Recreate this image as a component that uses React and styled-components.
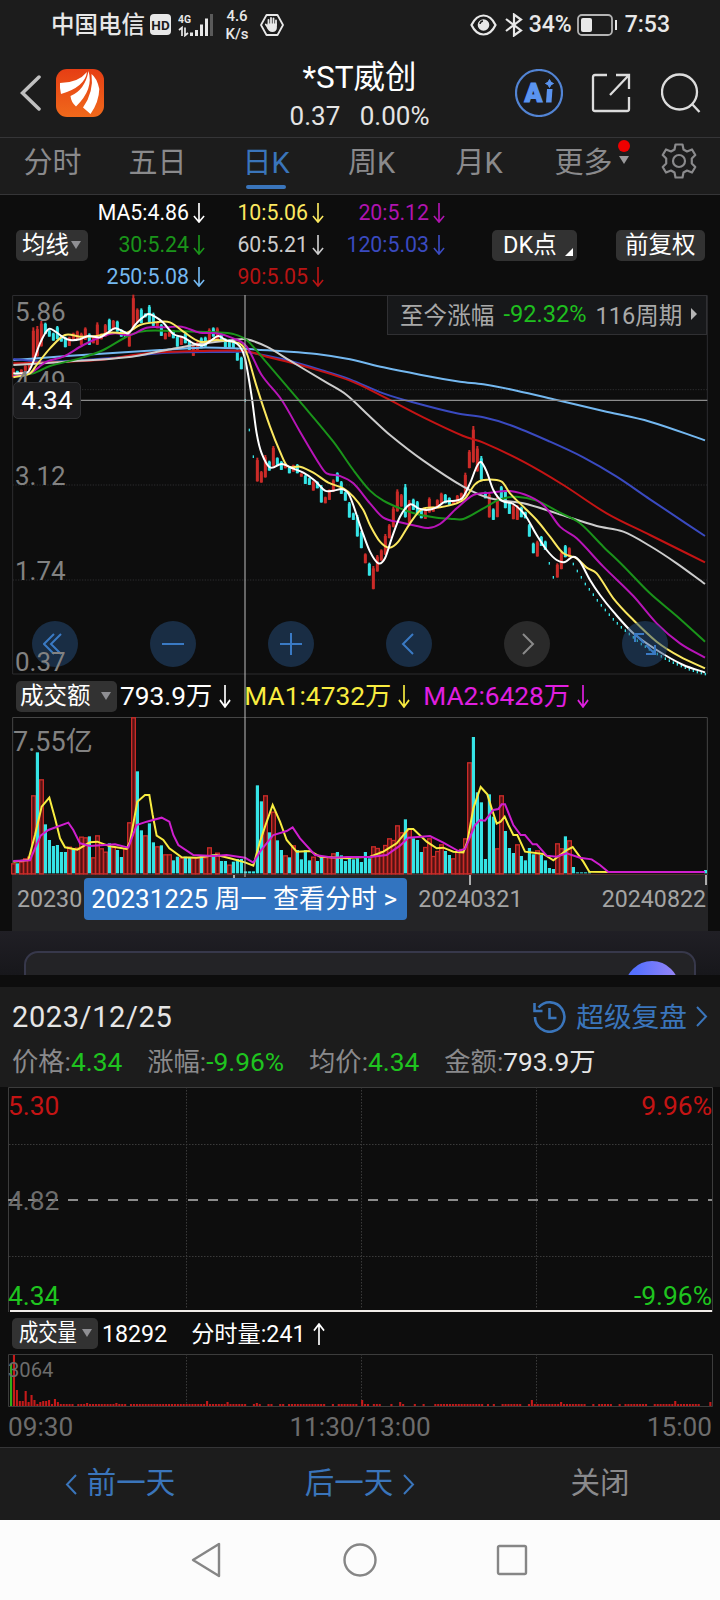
import React from "react";
import styled, { createGlobalStyle } from "styled-components";

const Global = createGlobalStyle`
  * { box-sizing: border-box; }
  body {
    margin: 0;
    background: #0d0d0d;
    font-family: Roboto, "Noto Sans CJK SC", sans-serif;
  }
  svg { display: block; flex: none; }
`;

const Screen = styled.div`
  width: 720px;
  height: 1600px;
  overflow: hidden;
  background: #0d0d0d;
  color: #fff;
  white-space: nowrap;
`;

/* ---------- status bar ---------- */
const StatusBar = styled.div`
  display: flex;
  align-items: center;
  height: 48px;
  padding: 1px 50px 0 51px;
  background: #1c1c1c;
  color: #e8e8e8;
`;
const StatusText = styled.span`
  font-size: ${(p) => p.$size || 23}px;
  font-weight: 500;
  line-height: 24px;
  margin-left: ${(p) => p.$left || 0}px;
`;
const HdBadge = styled.span`
  width: 21px;
  height: 21px;
  margin-left: 5px;
  border-radius: 4px;
  background: #e8e8e8;
  color: #1c1c1c;
  font-size: 13.5px;
  font-weight: 700;
  line-height: 22px;
  text-align: center;
`;
const Speed = styled.div`
  width: 24px;
  margin-left: 11px;
  font-size: 15px;
  font-weight: 500;
  line-height: 18px;
  text-align: center;
`;
const StatusRight = styled.div`
  display: flex;
  align-items: center;
  margin-left: auto;
`;

/* ---------- header ---------- */
const Header = styled.header`
  display: grid;
  grid-template-columns: 56px 104px 1fr 76px 70px 59px;
  align-items: center;
  height: 90px;
  padding-top: 1px;
  background: #1c1c1c;
  border-bottom: 1px solid #353537;
`;
const Title = styled.div`
  text-align: center;
  padding: 6px 0 0 44px;
  h1 {
    margin: 0;
    font-size: 31.5px;
    font-weight: 400;
    line-height: 39px;
  }
  p {
    margin: 0;
    font-size: 26px;
    line-height: 38px;
    color: #e4e4e4;
    word-spacing: 13px;
  }
`;

/* ---------- tabs ---------- */
const Tabs = styled.nav`
  display: grid;
  grid-template-columns: 105px 105px 112px 99px 116px 93px 90px;
  height: 57px;
  background: #1c1c1c;
  border-bottom: 1px solid #353537;
`;
const Tab = styled.div`
  position: relative;
  padding-top: 3px;
  font-size: 29px;
  line-height: 44px;
  text-align: center;
  color: ${(p) => (p.$on ? "#3a75bb" : "#8a8a8c")};
  &::after {
    content: "";
    display: ${(p) => (p.$on ? "block" : "none")};
    width: 40px;
    height: 4px;
    margin: 0 auto;
    border-radius: 2px;
    background: #3a75bb;
  }
`;
const RedDot = styled.i`
  position: absolute;
  right: 0;
  top: 2px;
  width: 12px;
  height: 12px;
  border-radius: 50%;
  background: #ef0000;
`;
const MoreArrow = styled.i`
  position: absolute;
  right: 1px;
  top: 18px;
  border: 5px solid transparent;
  border-top: 8px solid #9a9a9c;
  border-bottom: 0;
`;
const GearCell = styled.div`
  display: flex;
  justify-content: center;
  padding: 5px 0 0 8px;
`;

/* ---------- moving average legend ---------- */
const Legend = styled.section`
  display: grid;
  grid-template-columns: 72px 117px 119px 121px 1fr auto auto;
  align-items: center;
  height: 100px;
  padding: 0 15px 0 16px;
`;
const LegendColumn = styled.div`
  display: grid;
  grid-template-rows: repeat(3, 32px);
  justify-items: end;
`;
const LegendItem = styled.div`
  display: flex;
  align-items: center;
  gap: 4px;
  font-size: 21.3px;
  line-height: 30px;
  color: ${(p) => p.$color};
`;
const Chip = styled.div`
  position: relative;
  display: flex;
  align-items: center;
  width: ${(p) => p.$w}px;
  height: 31px;
  margin-right: ${(p) => p.$mr || 0}px;
  padding-left: ${(p) => p.$pl || 5}px;
  border-radius: 5px;
  background: #323232;
  font-size: ${(p) => p.$size || 23.5}px;
  line-height: 31px;
`;
const Caret = styled.i`
  margin-left: ${(p) => p.$left || 0}px;
  border: 5px solid transparent;
  border-top: 8px solid #8f8f93;
  border-bottom: 0;
`;
const Corner = styled.i`
  position: absolute;
  right: 4px;
  bottom: 5px;
  border-bottom: 8px solid #fff;
  border-left: 8px solid transparent;
`;
const Narrow = styled.span`
  display: inline-block;
  width: 57px;
  transform: scaleX(0.82);
  transform-origin: left;
`;

/* ---------- charts ---------- */
const ChartArea = styled.div`
  position: relative;
`;
const KChart = styled.div`
  position: relative;
  height: 379px;
`;
const PriceLabel = styled.span`
  position: absolute;
  left: 15px;
  top: ${(p) => p.$top}px;
  font-size: 26px;
  line-height: 30px;
  color: #828282;
`;
const PriceTag = styled.div`
  position: absolute;
  left: 13px;
  top: 87px;
  width: 68px;
  height: 37px;
  border: 1px solid #303033;
  border-radius: 5px;
  background: #1c1c1e;
  font-size: 26.3px;
  line-height: 35px;
  text-align: center;
`;
const RangeInfo = styled.div`
  position: absolute;
  right: 13px;
  top: 0;
  display: flex;
  align-items: center;
  gap: 9px;
  width: 320px;
  height: 40px;
  padding: 0 12px 2px 12px;
  border: 1px solid #303033;
  background: #17181a;
  color: #a9a9a9;
  font-size: 23.6px;
  b {
    font-weight: 400;
    color: #1fbf1f;
  }
`;
const Controls = styled.div`
  position: absolute;
  left: 32px;
  top: 326px;
  display: flex;
  gap: 72px;
`;
const RoundButton = styled.div`
  display: flex;
  align-items: center;
  justify-content: center;
  width: 46px;
  height: 46px;
  border-radius: 50%;
  background: ${(p) => (p.$off ? "rgba(72,72,72,.5)" : "rgba(38,78,124,.5)")};
`;
const CrossV = styled.i`
  position: absolute;
  z-index: 1;
  left: 244px;
  top: 0;
  width: 2px;
  height: 582px;
  background: rgba(190, 190, 190, 0.5);
`;
const VolumeHead = styled.div`
  display: flex;
  align-items: center;
  height: 43px;
  padding: 1px 0 0 16px;
`;
const Figure = styled.div`
  display: flex;
  align-items: center;
  gap: ${(p) => p.$gap || 7}px;
  margin-left: ${(p) => p.$left}px;
  padding-top: ${(p) => p.$top || 0}px;
  font-size: ${(p) => p.$size || 26.3}px;
  line-height: 32px;
  color: ${(p) => p.$color || "#fff"};
`;
const VolumeChart = styled.div`
  position: relative;
  height: 158px;
`;
const VolumeMax = styled.span`
  position: absolute;
  left: 13px;
  top: 9px;
  font-size: 27px;
  line-height: 32px;
  color: #828282;
`;
const DateAxis = styled.div`
  display: flex;
  justify-content: space-between;
  height: 56px;
  margin: 0 12px;
  padding: 3px 2px 0 5px;
  background: #242426;
  color: #a4a4a4;
  font-size: 23.2px;
  line-height: 43px;
`;
const DateGroup = styled.div`
  display: flex;
`;
const DateButton = styled.div`
  position: relative;
  z-index: 2;
  width: 323px;
  height: 42px;
  margin: 0 11px 0 2px;
  padding-right: 3px;
  border-radius: 4px;
  background: #3274c0;
  color: #fff;
  font-size: 26px;
  line-height: 42px;
  text-align: center;
`;

/* ---------- banner ---------- */
const Banner = styled.div`
  height: 44px;
  margin-bottom: 12px;
  padding: 20px 24px 0;
  overflow: hidden;
  background: linear-gradient(#201f25, #17171b);
`;
const BannerCard = styled.div`
  display: flex;
  justify-content: flex-end;
  height: 70px;
  padding: 8px 15px;
  border: 2px solid #37384b;
  border-radius: 14px;
  background: #232326;
  &::after {
    content: "";
    width: 54px;
    height: 54px;
    border-radius: 50%;
    background: linear-gradient(90deg, #5570ff 20%, #9a86f5);
  }
`;

/* ---------- day detail ---------- */
const Detail = styled.section`
  height: 100px;
  padding: 10px 12px 0;
  background: #1c1c1c;
`;
const DetailTop = styled.div`
  display: flex;
  align-items: center;
  height: 40px;
  color: #e6e6e6;
  font-size: 29px;
  letter-spacing: 0.6px;
`;
const Replay = styled.div`
  display: flex;
  align-items: center;
  margin-left: auto;
  color: #3a75bb;
  font-size: 27.7px;
  letter-spacing: 0;
  line-height: 38px;
  svg { margin-bottom: 2px; }
  span { margin: 1px 9px 0 10px; }
`;
const DetailRow = styled.div`
  display: flex;
  gap: 25px;
  margin-top: 6px;
  font-size: 26.3px;
  line-height: 39px;
  color: #8a8a8c;
`;
const Value = styled.span`
  color: ${(p) => p.$color};
`;
const DayChart = styled.div`
  position: relative;
  height: 225px;
`;
const DayLabel = styled.span`
  position: absolute;
  ${(p) => (p.$right ? "right: 8px" : "left: 8px")};
  top: ${(p) => p.$top}px;
  font-size: ${(p) => p.$size || 26.4}px;
  line-height: 30px;
  color: ${(p) => p.$color};
`;
const DayHead = styled.div`
  display: flex;
  align-items: center;
  height: 42px;
  padding: 0 12px;
`;
const DayVolume = styled.div`
  position: relative;
  height: 53px;
`;
const Times = styled.div`
  display: flex;
  justify-content: space-between;
  height: 40px;
  padding: 0 8px;
  color: #6c6c6c;
  font-size: 26.2px;
  line-height: 40px;
`;

/* ---------- bottom ---------- */
const Actions = styled.div`
  display: grid;
  grid-template-columns: repeat(3, 1fr);
  height: 73px;
  padding-bottom: 3px;
  border-top: 1px solid #353537;
  background: #1c1c1c;
  font-size: 29.5px;
  line-height: 40px;
  color: #3a75bb;
  svg { margin-top: 3px; }
`;
const Action = styled.div`
  display: flex;
  align-items: center;
  justify-content: center;
  gap: 10px;
  color: ${(p) => (p.$muted ? "#8a8a8c" : "inherit")};
`;
const SystemNav = styled.div`
  display: grid;
  grid-template-columns: 206px 1fr 206px;
  align-items: center;
  justify-items: center;
  height: 80px;
  padding: 0 103px;
  background: #fcfcfc;
  svg:last-child { margin-right: 4px; }
`;

const RED = "#cb2b28";
const CYAN = "#35e4e6";

// one entry per trading day: direction, high, low (chart units)
const candles =
  "r234-262 c242-256 r238-250 r226-245 r215-240 r112-215 r108-200 r93-170 c98-132 c120-140 c128-152 c108-148 c135-155 c140-172 r140-168 r128-152 r122-150 r128-165 r112-150 c130-165 r140-160 r97-165 r130-148 r102-140 c86-122 r90-118 c92-125 c118-140 c125-142 r125-170 r14-120 r55-98 c55-100 c70-82 c45-98 c68-108 r95-115 c102-138 r128-148 r118-140 c120-145 c138-170 r140-165 c128-160 c150-180 r165-198 r155-185 c142-175 c140-170 r115-160 c112-140 r112-150 c130-155 c145-172 c148-175 c150-175 c178-212 c200-238 d331 d420 d500 r503-575 r543-578 r495-563 c512-542 r468-528 c502-528 c513-540 r520-535 c530-550 r524-545 c522-550 r550-560 c555-582 c563-585 r572-602 c574-595 c585-638 r620-640 r598-630 r568-605 c547-575 c573-612 c605-632 c636-683 c668-690 c675-740 c723-775 r790-820 c818-857 r828-898 r795-845 r778-812 r732-795 r702-745 r650-712 r598-665 r612-650 c582-683 r630-708 c626-660 c633-670 c655-685 r655-687 r622-668 r650-665 r628-655 r608-640 c612-640 c622-645 r630-645 r615-640 r608-630 r548-618 r480-535 r408-518 r468-545 c498-570 c605-625 r608-683 c655-690 r620-682 c588-625 c600-655 c638-672 r645-688 r645-690 c650-682 c665-685 c702-740 c758-790 r752-800 c738-768 c752-780 d820 d862 r820-863 r785-838 c765-802 r772-802 d822 d843 d862 d882 d898 d914 d931 d946 d960 d974 d988 d1000 d1012 d1022 d1032 d1042 d1052 d1062 d1070 d1078 d1085 d1092 d1099 d1106 d1112 d1118 d1123 d1128 d1133 d1138 d1142 d1146 d1149 d1152".split(" ");

const volumes =
  "r565 c565 r560 r550 r545 r361 c232 r313 c448 c495 c513 c510 c531 c531 r515 c520 r518 r485 r487 c484 r547 r481 r520 r530 c505 r515 c525 c546 r520 r442 r127 c289 c466 r481 c445 c502 r514 c511 r538 r538 c556 c545 r548 c545 c547 r547 r547 c542 r547 r517 c538 r533 c558 c558 r569 c560 c552 c552 c589 c589 c589 c331 c379 r361 c472 r410 c496 c525 r541 c547 r511 c525 c553 c525 c556 r545 c558 c547 r545 r545 r535 c531 c541 c558 c545 c553 c550 c561 c531 c550 r514 r519 r528 r510 r490 r495 r451 r472 c433 r460 c490 c495 c531 r516 r490 r543 r528 r508 c528 c540 r550 r530 r522 r490 r262 c186 c352 c382 c552 c358 c425 r520 r361 c468 c519 c534 r508 c543 c556 c519 c538 r526 c540 c556 c579 c582 r505 r520 c484 r496 c576 c592 c592 c592 c592".split(" ");

// [colour, points left half, points right half (shifted by 1050)]
const averages = [
  ["#74b8f0", "40,210 200,198 350,188 480,180 600,173 700,175 850,184 950,192", "0,208 100,232 210,254 330,275 400,283 500,302 620,330 760,363 900,395 1065,451"],
  ["#3a4ac0", "40,207 150,215 380,200 500,188 700,186 740,186 850,208 980,245", "0,268 100,310 200,340 320,370 400,382 480,405 600,455 700,502 800,560 900,628 1065,738"],
  ["#c41414", "40,220 300,210 440,190 600,183 735,183 800,200 900,225", "0,272 100,320 220,382 340,438 400,458 520,515 640,585 770,670 900,735 1065,817"],
  ["#cccccc", "40,225 200,215 380,202 500,180 600,162 700,150 740,148 800,170 870,212 980,278 1040,315", "60,380 120,435 220,512 340,590 420,625 520,640 620,670 740,708 820,725 900,768 980,820 1065,882"],
  ["#1a941a", "40,255 100,250 150,228 240,205 310,180 390,135 440,122 550,124 650,127 700,132 740,150 800,218 900,335 1000,455 1060,540", "60,602 100,632 150,655 200,672 260,683 300,686 340,687 400,655 450,628 500,620 560,632 630,668 690,700 760,770 820,828 900,910 980,978 1065,1055"],
  ["#b814b8", "40,258 90,250 140,215 190,200 250,165 310,138 345,130 390,135 440,113 500,112 545,110 600,128 650,130 700,145 740,170 785,255 845,330 900,425 960,525 980,550 1020,558 1060,580", "60,640 100,683 150,697 200,708 235,714 270,702 320,655 370,615 420,608 480,603 540,620 585,650 630,710 680,745 760,830 850,918 920,1000 990,1060 1065,1103"],
  ["#fbe860", "40,262 90,250 110,225 150,175 195,135 240,140 290,138 330,128 380,128 420,105 465,97 510,97 550,125 600,155 650,150 700,155 725,165 742,195 770,290 810,410 840,485 862,528 900,530 940,548 985,578 1030,595 1060,620", "40,660 60,705 90,755 118,773 145,755 180,700 215,658 270,652 320,640 345,625 375,583 400,570 455,575 480,610 520,650 560,690 600,740 640,790 680,805 710,833 740,850 790,925 850,990 920,1055 990,1100 1065,1135"],
  ["#ffffff", "40,250 60,250 85,245 100,215 120,160 145,118 165,124 190,142 210,150 240,148 265,138 300,142 320,130 345,115 370,124 385,130 405,105 425,85 445,72 465,80 490,98 520,132 550,142 580,160 610,166 635,150 655,138 680,152 700,155 720,170 735,205 755,320 770,430 785,490 810,532 845,522 880,536 910,548 945,572 975,602 1000,602 1030,598 1050,620", "35,720 60,785 85,820 105,805 125,745 150,680 180,643 205,655 230,660 260,652 285,635 335,626 360,580 380,530 393,516 410,545 430,600 455,632 490,642 525,675 560,735 590,780 620,810 645,816 670,800 690,815 720,870 750,915 790,965 850,1030 920,1080 1000,1125 1065,1147"],
];

const volumeAverages = [
  ["#f8ec40", "40,560 85,555 105,480 125,395 148,368 165,430 180,490 195,517 232,524 270,502 292,500 330,514 380,522 390,500 412,380 435,360 448,360 458,420 470,482 490,495 508,520 545,547 590,548 650,540 690,550 735,562 760,572 780,500 795,455 818,390 840,440 860,495 890,530 930,528 960,545 1040,550", "0,548 60,545 100,530 140,505 175,462 190,462 230,500 260,520 280,518 310,530 340,532 352,500 370,400 392,336 412,358 425,400 440,446 452,440 464,425 475,450 490,480 502,480 525,530 580,537 610,556 650,525 668,516 700,560 718,590 780,591 1065,591"],
  ["#cf1fcf", "40,558 90,556 105,520 122,482 145,465 205,443 220,465 240,505 270,513 345,508 385,518 410,450 440,440 485,428 508,440 520,480 535,510 580,540 640,543 680,540 735,548 760,563 780,530 820,480 860,468 878,457 900,490 945,540 1000,548 1040,546", "60,546 110,540 150,512 175,488 240,483 280,503 325,528 345,522 375,450 390,435 405,437 430,405 445,402 455,388 465,388 490,450 512,480 525,480 548,508 560,508 590,542 620,545 650,535 690,548 725,553 750,570 775,591 1065,591"],
];

function parse(left, right) {
  const read = (s, dx) => s.split(" ").map((p) => {
    const [x, y] = p.split(",").map(Number);
    return [x + dx, y];
  });
  return [...read(left, 0), ...read(right, 1050)];
}

// catmull-rom through all points
function curve(pts) {
  let d = `M${pts[0]}`;
  for (let i = 0; i < pts.length - 1; i++) {
    const a = pts[i - 1] || pts[i];
    const b = pts[i];
    const c = pts[i + 1];
    const e = pts[i + 2] || c;
    const dx = (c[0] - b[0]) / 3;
    const s1 = (c[1] - a[1]) / (c[0] - a[0]);
    const s2 = (e[1] - b[1]) / (e[0] - b[0]);
    d += `C${b[0] + dx},${b[1] + s1 * dx} ${c[0] - dx},${c[1] - s2 * dx} ${c}`;
  }
  return d;
}

function CandleChart() {
  return (
    <svg width="720" height="379" viewBox="0 15 2160 1137" overflow="visible">
      <path d="M38 16.5H2122V1152H38Z" fill="none" stroke="#2c2c2f" strokeWidth="3" />
      <path d="M38 299H2122M38 585H2122M38 870H2122" stroke="#2c2c2e" strokeWidth="3" strokeDasharray="4 4" />
      {candles.map((c, i) => {
        const x = 40 + i * 12;
        const [a, b] = c.slice(1).split("-").map(Number);
        if (c[0] === "d") return <rect key={i} x={x - 2} y={a - 4} width="4" height="8" fill={CYAN} />;
        return (
          <g key={i} fill={c[0] === "r" ? RED : CYAN}>
            <rect x={x - 3} y={a} width="6" height={b - a} />
            <rect x={x - 4.5} y={a + (b - a) * 0.1} width="9" height={(b - a) * 0.88} />
          </g>
        );
      })}
      {averages.map(([color, l, r]) => (
        <path key={color} d={curve(parse(l, r))} fill="none" stroke={color} strokeWidth="6" />
      ))}
      <path d="M240 331H2122" stroke="#8c8c8c" strokeWidth="3.5" />
    </svg>
  );
}

function VolumeBars() {
  return (
    <svg width="720" height="158" viewBox="0 126 2160 474" overflow="visible">
      <path d="M38 600V127.5H2122V600" fill="none" stroke="#454545" strokeWidth="3" />
      <path d="M36 598H2122" stroke="#5a3434" strokeWidth="3" />
      {volumes.map((v, i) => {
        const x = 40 + i * 12;
        const y = Number(v.slice(1));
        return v[0] === "c" ? (
          <rect key={i} x={x - 4.5} y={y} width="9.5" height={595 - y} fill={CYAN} />
        ) : (
          <rect key={i} x={x - 5} y={y + 1.5} width="11" height={595 - y} fill="#521313" stroke={RED} strokeWidth="4" />
        );
      })}
      <rect x="2112" y="585" width="9" height="10" fill={CYAN} />
      {volumeAverages.map(([color, l, r]) => (
        <polyline key={color} points={parse(l, r).join(" ")} fill="none" stroke={color} strokeWidth="6" />
      ))}
      <path d="M702 600v9M1410 600v30M2118 600v30" stroke="#c8c8c8" strokeWidth="5" />
    </svg>
  );
}

const gaps = [[73, 77], [126, 130], [246, 253], [262, 266], [272, 279], [284, 287], [327, 330], [334, 337], [357, 361], [369, 372], [381, 389], [394, 398], [406, 412], [417, 421], [426, 433], [483, 486], [489, 491], [496, 500], [523, 528], [585, 591], [596, 599], [611, 617], [622, 625], [646, 649], [651, 654], [699, 702], [704, 710]];
const peaks = { 0: 42, 1: 51, 2: 16, 3: 5, 4: 5, 5: 15, 6: 4, 7: 11, 8: 6, 10: 4, 11: 5, 12: 5, 13: 6, 15: 7, 16: 4, 26: 3, 36: 3, 67: 5, 74: 4, 84: 3, 120: 6, 133: 4, 178: 6, 188: 4, 227: 5, 239: 4 };

function DayBars() {
  const bars = [];
  for (let i = 0; i < 240; i++) {
    const x = 10 + i * 2.926;
    if (!peaks[i] && gaps.some(([a, b]) => x >= a - 1 && x <= b - 1)) continue;
    const h = peaks[i] || 2;
    bars.push(<rect key={i} x={x} y={52 - h} width="2.1" height={h} fill={i === 0 ? "#2fae1c" : "#c41a1a"} />);
  }
  return (
    <svg width="720" height="53" viewBox="0 0 720 53">
      <path d="M8.5 0.5H712.5V52.5H8.5Z" fill="none" stroke="#3c3c3c" />
      <path d="M186.5 0V52M361.5 0V52M536.5 0V52" stroke="#3a3a3a" strokeDasharray="1.5 1.5" />
      {bars}
    </svg>
  );
}

function Arrow({ up, h = 20 }) {
  return (
    <svg width="12" height={h} viewBox="0 0 13 20" fill="none" stroke="currentColor" strokeWidth="1.8" preserveAspectRatio="none">
      <path d={up ? "M6.5 20V1M1 7L6.5 1L12 7" : "M6.5 0V19M1 13L6.5 19L12 13"} />
    </svg>
  );
}

function Chevron({ left, w = 12, h = 21 }) {
  return (
    <svg width={w} height={h} viewBox="0 0 12 21" fill="none" stroke="currentColor" strokeWidth="2">
      <path d={left ? "M11 1L2 10.5L11 20" : "M1 1L10 10.5L1 20"} />
    </svg>
  );
}

function ControlIcon({ d, off }) {
  return (
    <svg width="24" height="24" viewBox="0 0 24 24" fill="none" stroke={off ? "#8a8a8a" : "#3a7ac4"} strokeWidth="2">
      <path d={d} />
    </svg>
  );
}

const controls = [
  "M11 2L1 12L11 22M18 2L8 12L18 22",
  "M1 12H23",
  "M1 12H23M12 1V23",
  "M16 2L6 12L16 22",
  "M8 2L18 12L8 22",
  "M11 11L2 2M2 10V2H11M13 13L22 22M22 13V22H13",
];

function SignalIcon() {
  return (
    <svg width="36" height="24" viewBox="0 0 36 24" style={{ marginLeft: 7 }}>
      <text x="0" y="10" fontSize="11.5" fontWeight="700" fill="#e8e8e8" textLength="13" lengthAdjust="spacingAndGlyphs">4G</text>
      <path d="M1 17l3-2.500v8.500M7 14.500v8l3-2.500" fill="none" stroke="#e8e8e8" strokeWidth="1.700" />
      <path d="M13.500 19.500v3.500M18.500 17v6M23.500 11.500v11.500M28.500 5.500v17.500" stroke="#e8e8e8" strokeWidth="3" />
      <path d="M33.500 1v22" stroke="#5a5a5a" strokeWidth="3" />
    </svg>
  );
}

function HandIcon() {
  return (
    <svg width="24" height="24" viewBox="0 0 24 24" style={{ marginLeft: 11 }}>
      <path d="M6.500 2h11L23 12l-5.500 10h-11L1 12Z" fill="none" stroke="#e8e8e8" strokeWidth="1.800" strokeLinejoin="round" />
      <path d="M8.500 12V6.800M11 11V5M13.500 11V5.500M16 12V7.500M8.500 15L5.800 11.500" stroke="#e8e8e8" strokeWidth="1.800" strokeLinecap="round" />
      <path d="M7.600 10.500h9.300v4.500q-.5 4-4.500 4t-5.800-5Z" fill="#e8e8e8" />
    </svg>
  );
}

function EyeIcon() {
  return (
    <svg width="27" height="22" viewBox="0 0 27 22">
      <path d="M1.500 11Q6 1.500 13.500 1.500T25.500 11Q21 20.500 13.500 20.500T1.500 11Z" fill="none" stroke="#e8e8e8" strokeWidth="2.200" />
      <circle cx="13.500" cy="11" r="5.800" fill="#e8e8e8" />
      <path d="M10 10q.5-2.800 3-3" fill="none" stroke="#1c1c1c" strokeWidth="1.400" />
    </svg>
  );
}

function BluetoothIcon() {
  return (
    <svg width="18" height="24" viewBox="0 0 18 24" fill="none" stroke="#e8e8e8" strokeWidth="2.200" style={{ marginLeft: 8 }}>
      <path d="M1 6L16 17.500L9 22.500V1.500L16 6.500L1 18" />
    </svg>
  );
}

function BatteryIcon() {
  return (
    <svg width="41" height="22" viewBox="0 0 41 22" style={{ marginLeft: 5 }}>
      <rect x="1" y="1" width="34" height="20" rx="4" fill="none" stroke="#b4b4b4" strokeWidth="1.800" />
      <rect x="4" y="4" width="11" height="14" rx="2" fill="#e8e8e8" />
      <path d="M39 6v10" stroke="#e8e8e8" strokeWidth="2" />
    </svg>
  );
}

function Logo() {
  return (
    <svg width="48" height="48" viewBox="0 0 48 48">
      <defs>
        <linearGradient id="logo" x1="0" y1="0" x2="0" y2="1">
          <stop offset="0" stopColor="#e63e14" />
          <stop offset="1" stopColor="#f0691b" />
        </linearGradient>
      </defs>
      <rect width="48" height="48" rx="11" fill="url(#logo)" />
      <path d="M4 14Q22 14 31 3Q29 18 5 25Q3.500 19 4 14Z" fill="#fff" />
      <path d="M14.500 27Q29 21 32.500 2Q38 20 20 37.500Q15 33 14.500 27Z" fill="#fff" />
      <path d="M35.500 5Q41 9 43.300 20Q43 33 34.500 45L27 38.500Q38 23 35.500 5Z" fill="#fff" />
    </svg>
  );
}

function AiIcon() {
  return (
    <svg width="48" height="48" viewBox="0 0 48 48">
      <circle cx="24" cy="24" r="23" fill="none" stroke="#5284d4" strokeWidth="2.200" />
      <text x="9.500" y="32.500" fontSize="26" fontWeight="900" fill="#5a94f0" stroke="#5a94f0" strokeWidth="1.200">A</text>
      <path d="M32 20h5.500l-1 13.500h-5.500Z" fill="#5a94f0" />
      <path d="M34.500 10.500l1.500 2.700 2.500 1.300-2.500 1.300-1.500 2.700-1.500-2.700-2.500-1.300 2.500-1.300Z" fill="#5a94f0" stroke="#5a94f0" />
    </svg>
  );
}

function ShareIcon() {
  return (
    <svg width="40" height="40" viewBox="0 0 40 40" fill="none" stroke="#dcdcdc" strokeWidth="2.300">
      <path d="M16 2H4Q2 2 2 4V36Q2 38 4 38H36Q38 38 38 36V24M25 2H38V16M38 2L19 22" />
    </svg>
  );
}

function SearchIcon() {
  return (
    <svg width="40" height="40" viewBox="0 0 40 40" fill="none" stroke="#dcdcdc" strokeWidth="2.300">
      <circle cx="18.500" cy="19" r="17.500" />
      <path d="M31 31L38.500 39" />
    </svg>
  );
}

function GearIcon() {
  return (
    <svg width="36" height="36" viewBox="0 0 36 36" fill="none" stroke="#8a8a8c" strokeWidth="2.200" strokeLinejoin="round">
      <path d="M14.500 1.500h7l1 5 3.500 2 5-2 3.300 5.500-3.500 3.500v5l3.500 3.500-3.300 5.500-5-2-3.500 2-1 5h-7l-1-5-3.500-2-5 2L1.700 24l3.500-3.500v-5L1.700 12 5 6.500l5 2 3.500-2Z" />
      <circle cx="18" cy="18" r="6" />
    </svg>
  );
}

function HistoryIcon() {
  return (
    <svg width="33" height="33" viewBox="0 0 33 33" fill="none" stroke="currentColor" strokeWidth="2.600">
      <path d="M2 17A14.700 14.700 0 1 0 5.500 7.500M1.500 3V11H9.500M16.500 8V18H23.500" />
    </svg>
  );
}

const legend = [
  [["MA5:4.86", "#fff"], ["30:5.24", "#1a941a"], ["250:5.08", "#74b8f0"]],
  [["10:5.06", "#fbe860"], ["60:5.21", "#cccccc"], ["90:5.05", "#b81414"]],
  [["20:5.12", "#b014b0"], ["120:5.03", "#3a4ac0"]],
];
const stats = [
  ["价格", "4.34", "#1fc41f"],
  ["涨幅", "-9.96%", "#1fc41f"],
  ["均价", "4.34", "#1fc41f"],
  ["金额", "793.9万", "#e6e6e6"],
];

export default function App() {
  return (
    <Screen>
      <Global />
      <StatusBar>
        <StatusText $size={23.5}>中国电信</StatusText>
        <HdBadge>HD</HdBadge>
        <SignalIcon />
        <Speed>4.6<br />K/s</Speed>
        <HandIcon />
        <StatusRight>
          <EyeIcon />
          <BluetoothIcon />
          <StatusText $left={6}>34%</StatusText>
          <BatteryIcon />
          <StatusText $left={7}>7:53</StatusText>
        </StatusRight>
      </StatusBar>

      <Header>
        <svg width="22" height="36" viewBox="0 0 22 36" fill="none" stroke="#c0c0c0" strokeWidth="3.5" strokeLinecap="round" style={{ marginLeft: 20 }}>
          <path d="M19 2L2.500 18L19 34" />
        </svg>
        <Logo />
        <Title>
          <h1>*ST威创</h1>
          <p>0.37 0.00%</p>
        </Title>
        <AiIcon />
        <ShareIcon />
        <SearchIcon />
      </Header>

      <Tabs>
        <Tab>分时</Tab>
        <Tab>五日</Tab>
        <Tab $on>日K</Tab>
        <Tab>周K</Tab>
        <Tab>月K</Tab>
        <Tab>更多<RedDot /><MoreArrow /></Tab>
        <GearCell><GearIcon /></GearCell>
      </Tabs>

      <Legend>
        <Chip $w={72} $pl={6}>均线<Caret $left={2} /></Chip>
        {legend.map((col, i) => (
          <LegendColumn key={i}>
            {col.map(([text, color]) => (
              <LegendItem key={text} $color={color}>{text}<Arrow /></LegendItem>
            ))}
          </LegendColumn>
        ))}
        <span />
        <Chip $w={85} $pl={11} $mr={39}>DK点<Corner /></Chip>
        <Chip $w={89} $pl={9}>前复权</Chip>
      </Legend>

      <ChartArea>
        <KChart>
          <CandleChart />
          <Controls>
            {controls.map((d, i) => (
              <RoundButton key={i} $off={i === 4}><ControlIcon d={d} off={i === 4} /></RoundButton>
            ))}
          </Controls>
          <PriceLabel $top={2}>5.86</PriceLabel>
          <PriceLabel $top={71}>4.49</PriceLabel>
          <PriceLabel $top={166}>3.12</PriceLabel>
          <PriceLabel $top={261}>1.74</PriceLabel>
          <PriceLabel $top={352}>0.37</PriceLabel>
          <PriceTag>4.34</PriceTag>
          <RangeInfo>
            <span>至今涨幅</span><b>-92.32%</b><span>116周期</span>
            <svg width="7" height="12" viewBox="0 0 7 12"><path d="M0 0L6 6L0 12Z" fill="#b4b4b4" /></svg>
          </RangeInfo>
        </KChart>
        <VolumeHead>
          <Chip $w={101} $pl={4}>成交额<Caret $left={10} /></Chip>
          <Figure $left={3}>793.9万<Arrow h={23} /></Figure>
          <Figure $left={13} $color="#f8ec40">MA1:4732万<Arrow h={23} /></Figure>
          <Figure $left={13} $color="#e01fe0">MA2:6428万<Arrow h={23} /></Figure>
        </VolumeHead>
        <VolumeChart>
          <VolumeMax>7.55亿</VolumeMax>
          <VolumeBars />
        </VolumeChart>
        <DateAxis>
          <DateGroup>
            <span>20230</span>
            <DateButton>20231225 周一 查看分时 &gt;</DateButton>
            <span>20240321</span>
          </DateGroup>
          <span>20240822</span>
        </DateAxis>
        <CrossV />
      </ChartArea>

      <Banner><BannerCard /></Banner>

      <Detail>
        <DetailTop>
          2023/12/25
          <Replay><HistoryIcon /><span>超级复盘</span><Chevron /></Replay>
        </DetailTop>
        <DetailRow>
          {stats.map(([name, value, color]) => (
            <div key={name}>{name}:<Value $color={color}>{value}</Value></div>
          ))}
        </DetailRow>
      </Detail>

      <DayChart>
        <svg width="720" height="225" viewBox="0 0 720 225" fill="none">
          <path d="M8.500 225V0.500H712.500V225" stroke="#3c3c3c" />
          <path d="M186.500 0V222M361.500 0V222M536.500 0V222" stroke="#3a3a3a" strokeDasharray="1.500 1.500" />
          <path d="M9 57.500H712M9 169.500H712" stroke="#3a3a3a" strokeDasharray="1.500 1.500" />
          <path d="M8 113H712" stroke="#8c8c8c" strokeWidth="2" strokeDasharray="10 10" />
          <path d="M10 224H712" stroke="#f0ece8" strokeWidth="2" />
        </svg>
        <DayLabel $top={4} $color="#c41414">5.30</DayLabel>
        <DayLabel $top={99} $color="#6c6c6c">4.82</DayLabel>
        <DayLabel $top={194} $color="#1fc41f">4.34</DayLabel>
        <DayLabel $right $top={4} $color="#c41414">9.96%</DayLabel>
        <DayLabel $right $top={194} $color="#1fc41f">-9.96%</DayLabel>
      </DayChart>
      <DayHead>
        <Chip $w={86} $pl={7}><Narrow>成交量</Narrow><Caret $left={6} /></Chip>
        <Figure $left={4} $top={2} $size={23.2}>18292</Figure>
        <Figure $left={24} $top={2} $size={23.2} $gap={8}>分时量:241<Arrow up h={22} /></Figure>
      </DayHead>
      <DayVolume>
        <DayBars />
        <DayLabel $top={1} $size={20.2} $color="#6c6c6c">3064</DayLabel>
      </DayVolume>
      <Times>
        <span>09:30</span>
        <span>11:30/13:00</span>
        <span>15:00</span>
      </Times>

      <Actions>
        <Action><Chevron left />前一天</Action>
        <Action>后一天<Chevron /></Action>
        <Action $muted>关闭</Action>
      </Actions>
      <SystemNav>
        <svg width="30" height="36" viewBox="0 0 30 36" fill="none" stroke="#868686" strokeWidth="2.400" strokeLinejoin="round">
          <path d="M28 2V34L2 18Z" />
        </svg>
        <svg width="34" height="34" viewBox="0 0 34 34" fill="none" stroke="#868686" strokeWidth="2.400">
          <circle cx="17" cy="17" r="15.500" />
        </svg>
        <svg width="32" height="32" viewBox="0 0 32 32" fill="none" stroke="#868686" strokeWidth="2.400">
          <rect x="2" y="2" width="28" height="28" rx="1.500" />
        </svg>
      </SystemNav>
    </Screen>
  );
}
